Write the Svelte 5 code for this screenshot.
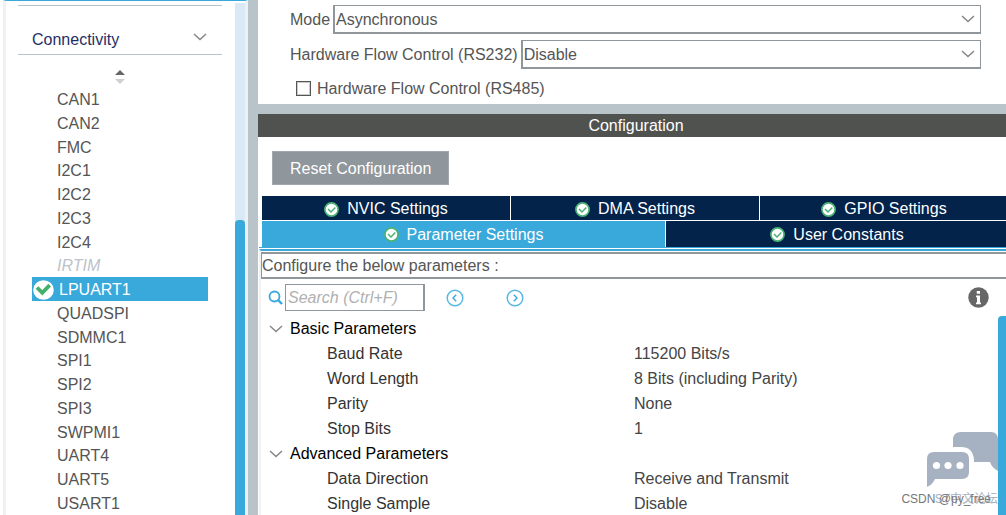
<script>
  const peripherals = [
    'CAN1', 'CAN2', 'FMC', 'I2C1', 'I2C2', 'I2C3', 'I2C4', 'IRTIM', 'LPUART1',
    'QUADSPI', 'SDMMC1', 'SPI1', 'SPI2', 'SPI3', 'SWPMI1', 'UART4', 'UART5', 'USART1'
  ]
  const unavailable = ['IRTIM']

  const tabRows = [
    [
      { name: 'NVIC Settings', grow: 1 },
      { name: 'DMA Settings', grow: 1 },
      { name: 'GPIO Settings', grow: 1 }
    ],
    [
      { name: 'Parameter Settings', grow: 403 },
      { name: 'User Constants', grow: 342 }
    ]
  ]

  const groups = [
    {
      name: 'Basic Parameters',
      rows: [
        ['Baud Rate', '115200 Bits/s'],
        ['Word Length', '8 Bits (including Parity)'],
        ['Parity', 'None'],
        ['Stop Bits', '1']
      ]
    },
    {
      name: 'Advanced Parameters',
      rows: [
        ['Data Direction', 'Receive and Transmit'],
        ['Single Sample', 'Disable']
      ]
    }
  ]

  let selected = $state('LPUART1')
  let activeTab = $state('Parameter Settings')
  let mode = $state('Asynchronous')
  let flowControl = $state('Disable')
  let rs485 = $state(false)
  let search = $state('')
  let closed = $state({})
</script>

{#snippet chevron()}
  <svg class="chevron" width="14" height="8" viewBox="0 0 14 8" aria-hidden="true">
    <path d="M1 1 L7 6.5 L13 1" fill="none" stroke="#868686" stroke-width="1.5" />
  </svg>
{/snippet}

{#snippet check()}
  <svg width="15" height="15" viewBox="0 0 15 15" aria-hidden="true">
    <circle cx="7.5" cy="7.5" r="6.6" fill="#fff" stroke="#4bb276" stroke-width="1.7" />
    <path d="M4 7 L7 10 L11.3 5.6" fill="none" stroke="#4bb276" stroke-width="1.5" />
  </svg>
{/snippet}

<div class="app">
  <aside>
    <div class="categories">
      <button class="category">
        Connectivity
        {@render chevron()}
      </button>
      <button class="sort" aria-label="Sort">
        <svg width="10" height="14" viewBox="0 0 10 14">
          <path d="M0 5 L5 0 L10 5 Z" fill="#666" />
          <path d="M0 9 L5 14 L10 9 Z" fill="#d0d0d0" />
        </svg>
      </button>
      <ul>
        {#each peripherals as name}
          <li>
            <button
              class="peripheral"
              class:selected={selected === name}
              disabled={unavailable.includes(name)}
              onclick={() => (selected = name)}
            >
              {#if selected === name}
                <svg width="21" height="20" viewBox="0 0 21 20" aria-hidden="true">
                  <ellipse cx="10.5" cy="10" rx="10.3" ry="9.8" fill="#fff" />
                  <path d="M4 7.5 L9.3 12.8 L16.7 5.2" fill="none" stroke="#43b06c" stroke-width="3.8" />
                </svg>
              {/if}
              {name}
            </button>
          </li>
        {/each}
      </ul>
    </div>
    <div class="track"><div class="thumb"></div></div>
  </aside>

  <main>
    <section class="mode">
      <div class="field">
        <label for="mode">Mode</label>
        <div class="select">
          <select id="mode" bind:value={mode}>
            <option>Disable</option>
            <option>Asynchronous</option>
          </select>
          {@render chevron()}
        </div>
      </div>
      <div class="field">
        <label for="flow">Hardware Flow Control (RS232)</label>
        <div class="select">
          <select id="flow" bind:value={flowControl}>
            <option>Disable</option>
            <option>CTS/RTS</option>
          </select>
          {@render chevron()}
        </div>
      </div>
      <label class="tick">
        <input type="checkbox" bind:checked={rs485} />
        Hardware Flow Control (RS485)
      </label>
    </section>

    <h2>Configuration</h2>

    <section class="configuration">
      <button class="reset">Reset Configuration</button>

      <div class="tabs">
        {#each tabRows as row}
          <div class="tab-row">
            {#each row as tab}
              <button
                class="tab"
                class:active={activeTab === tab.name}
                style="flex-grow: {tab.grow}"
                onclick={() => (activeTab = tab.name)}
              >
                {@render check()}
                {tab.name}
              </button>
            {/each}
          </div>
        {/each}
      </div>

      <div class="panel">
        <p>Configure the below parameters :</p>

        <div class="toolbar">
          <label for="search" aria-label="Search">
            <svg width="15" height="15" viewBox="0 0 15 15">
              <circle cx="6.5" cy="6.5" r="5" fill="none" stroke="#39a9dc" stroke-width="1.8" />
              <path d="M9.5 9.5 L14 14" stroke="#39a9dc" stroke-width="2.4" />
            </svg>
          </label>
          <input id="search" type="text" placeholder="Search (Ctrl+F)" bind:value={search} />
          <button class="step" aria-label="Previous match">
            <svg width="18" height="18" viewBox="0 0 18 18">
              <circle cx="9" cy="9" r="7.8" fill="none" stroke="#58b8e3" stroke-width="1.5" />
              <path d="M10.2 5.8 L7 9 L10.2 12.2" fill="none" stroke="#39a9dc" stroke-width="1.4" />
            </svg>
          </button>
          <button class="step" aria-label="Next match">
            <svg width="18" height="18" viewBox="0 0 18 18">
              <circle cx="9" cy="9" r="7.8" fill="none" stroke="#58b8e3" stroke-width="1.5" />
              <path d="M7.8 5.8 L11 9 L7.8 12.2" fill="none" stroke="#39a9dc" stroke-width="1.4" />
            </svg>
          </button>
          <button class="info" aria-label="Information">
            <svg width="21" height="21" viewBox="0 0 21 21">
              <circle cx="10.5" cy="10.5" r="10.2" fill="#666" />
              <path d="M8.8 4 H12 V6.8 H8.8 Z M8 8.5 H12 V15.5 H13 V17.3 H8 V15.5 H9 V10.3 H8 Z" fill="#fff" />
            </svg>
          </button>
        </div>

        <div class="parameters">
          <table>
            {#each groups as group}
              <tbody>
                <tr>
                  <th colspan="2">
                    <button
                      class="group"
                      onclick={() => (closed[group.name] = !closed[group.name])}
                    >
                      {@render chevron()}
                      {group.name}
                    </button>
                  </th>
                </tr>
                {#if !closed[group.name]}
                  {#each group.rows as [name, value]}
                    <tr>
                      <td class="name">{name}</td>
                      <td>{value}</td>
                    </tr>
                  {/each}
                {/if}
              </tbody>
            {/each}
          </table>
          <div class="bar"></div>
        </div>
      </div>
    </section>
  </main>

  <div class="watermark">
    <svg width="72" height="56" viewBox="0 0 72 56" aria-hidden="true">
      <path
        d="M26 15 V8 Q26 0 34 0 H64 Q71 0 71 8 V39 Q65 36 63 30 H47 V28 Q46 15 34 15 Z"
        fill="#a6b1c1"
      />
      <path
        d="M7 20 H35 Q42 20 42 27 V40 Q42 47 35 47 H8 Q6 52 0 55 V27 Q0 20 7 20 Z"
        fill="#a6b1c1"
      />
      <circle cx="9.5" cy="33.5" r="3.6" fill="#fff" />
      <circle cx="21" cy="33.5" r="3.6" fill="#fff" />
      <circle cx="33" cy="33.5" r="3.6" fill="#fff" />
    </svg>
    <span class="forum">ST中文论坛</span>
    <span class="author">CSDN @py_free</span>
  </div>
</div>

<style>
  :global(body) {
    margin: 0;
    background: #fff;
  }
  .app {
    position: relative;
    display: flex;
    height: 100vh;
    overflow: hidden;
    font: 16px/24px 'Liberation Sans', Arial, sans-serif;
    color: #555;
  }
  button,
  input,
  select {
    margin: 0;
    padding: 0;
    border: none;
    border-radius: 0;
    background: none;
    font: inherit;
    color: inherit;
    box-sizing: border-box;
  }
  svg {
    display: block;
    flex: none;
  }

  aside {
    display: flex;
    flex: none;
    width: 239px;
    margin-left: 3px;
    border-top: 1px solid #39a9dc;
    border-left: 3px solid #f1f1f1;
    border-right: 3px solid #eef1f4;
  }
  .categories {
    flex: 1;
    padding: 4px 13px 0 12px;
  }
  .category {
    display: flex;
    align-items: center;
    justify-content: space-between;
    width: 100%;
    height: 50px;
    padding: 19px 15px 0 14px;
    border-top: 1px solid #b8c4ca;
    border-bottom: 1px solid #b8c4ca;
    color: #1f2f66;
  }
  .category .chevron {
    margin-bottom: 5px;
  }
  .sort {
    display: block;
    margin: 15px auto 3px;
  }
  ul {
    margin: 0;
    padding: 0 14px;
    list-style: none;
  }
  li {
    height: 24px;
  }
  /* the row pitch is a shade under 24px */
  li:nth-child(4n + 3) {
    height: 23px;
  }
  .peripheral {
    display: flex;
    align-items: center;
    gap: 5px;
    width: 100%;
    height: 24px;
    padding: 2px 0 0 25px;
  }
  .peripheral:disabled {
    font-style: italic;
    color: #bcc3c9;
  }
  .peripheral.selected {
    padding-left: 1px;
    background: #39a9dc;
    color: #fff;
  }
  .track {
    flex: none;
    width: 10px;
    padding-top: 217px;
    margin-top: 2px;
    background: #d9e9f5;
  }
  .thumb {
    height: 100%;
    border-radius: 4px 4px 0 0;
    background: #39a9dc;
  }

  main {
    display: flex;
    flex-direction: column;
    flex: 1;
    min-width: 0;
    border-left: 10px solid #b8c4ca;
  }
  .mode {
    display: flex;
    flex-direction: column;
    gap: 6px;
    padding: 5px 25px 2px 32px;
    border-bottom: 10px solid #b8c4ca;
  }
  .field {
    display: flex;
    align-items: center;
    gap: 3px;
  }
  .select {
    position: relative;
    flex: 1;
  }
  .select select {
    display: block;
    width: 100%;
    height: 29px;
    padding: 1px 0 0 1px;
    border: 1px solid #8f969c;
    border-width: 1px 1px 2px 2px;
    appearance: none;
  }
  .select .chevron {
    position: absolute;
    top: 10px;
    right: 6px;
    pointer-events: none;
  }
  .tick {
    display: flex;
    align-items: center;
    gap: 6px;
    height: 27px;
    padding-left: 6px;
  }
  .tick input {
    width: 15px;
    height: 15px;
    border: 1px solid #555;
    outline: 1px solid #ccc;
    outline-offset: -2px;
    appearance: none;
  }
  .tick input:checked {
    background: #39a9dc;
  }
  h2 {
    margin: 0;
    padding-left: 8px;
    background: #505250;
    color: #fff;
    font-size: 16px;
    font-weight: normal;
    line-height: 23px;
    text-align: center;
  }

  .configuration {
    display: flex;
    flex-direction: column;
    flex: 1;
    min-height: 0;
  }
  .reset {
    align-self: flex-start;
    height: 34px;
    margin: 14px 14px 11px;
    padding: 1px 17px 0;
    border: 1px solid #a2a8ad;
    background: #8f969c;
    color: #fff;
  }
  .tabs {
    display: flex;
    flex-direction: column;
    gap: 1px;
    margin: 0 -2px 0 1px;
    border-bottom: 1px solid #39a9dc;
  }
  .tab-row {
    display: flex;
    gap: 1px;
    margin-left: 3px;
  }
  .tab {
    display: flex;
    align-items: center;
    justify-content: center;
    gap: 8px;
    flex-basis: 0;
    height: 26px;
    padding-top: 1px;
    background: #03234b;
    color: #fff;
  }
  .tab-row:first-child .tab {
    height: 24px;
    padding-top: 2px;
  }
  .tab.active {
    background: #39a9dc;
  }
  .panel {
    display: flex;
    flex-direction: column;
    flex: 1;
    min-height: 0;
    margin: 1px 0 0 1px;
    border-top: 2px solid #39a9dc;
    border-left: 2px solid #f1f1f1;
  }
  p {
    margin: 1px -2px 5px 0;
    border: 2px solid #8f969c;
    border-left-width: 1px;
    line-height: 23px;
  }
  .toolbar {
    display: flex;
    align-items: center;
    padding: 0 17px 0 7px;
  }
  .toolbar input {
    width: 140px;
    height: 27px;
    margin: 0 21px 0 2px;
    padding: 1px 0 0 2px;
    border: 1px solid #8f969c;
    border-right-width: 2px;
  }
  .toolbar input::placeholder {
    font-style: italic;
    color: #b0b0b0;
  }
  .step {
    margin-right: 42px;
  }
  .info {
    margin-left: auto;
  }
  .parameters {
    display: flex;
    flex: 1;
    min-height: 0;
    padding-top: 5px;
  }
  table {
    flex: 1;
    align-self: flex-start;
    border-collapse: collapse;
    table-layout: fixed;
  }
  th,
  td {
    height: 25px;
    padding: 0;
    font-weight: normal;
    text-align: left;
    color: #444;
  }
  .name {
    width: 307px;
    padding-left: 66px;
    color: #333;
  }
  .group {
    display: flex;
    align-items: center;
    gap: 7px;
    padding-left: 8px;
    color: #000;
  }
  .bar {
    flex: none;
    width: 8px;
    border-radius: 4px 0 0 0;
    background: #39a9dc;
  }

  .watermark {
    position: absolute;
    right: 7px;
    bottom: 7px;
    display: grid;
    justify-items: end;
    row-gap: 2px;
    font-size: 12px;
    line-height: 18px;
    pointer-events: none;
  }
  .forum,
  .author {
    grid-row: 2;
    grid-column: 1;
  }
  .forum {
    margin-right: 1px;
    font-family: 'Liberation Sans', 'Noto Sans CJK SC', sans-serif;
    color: #a6b1c1;
  }
  .author {
    margin-right: 8px;
    color: #777;
  }
</style>
